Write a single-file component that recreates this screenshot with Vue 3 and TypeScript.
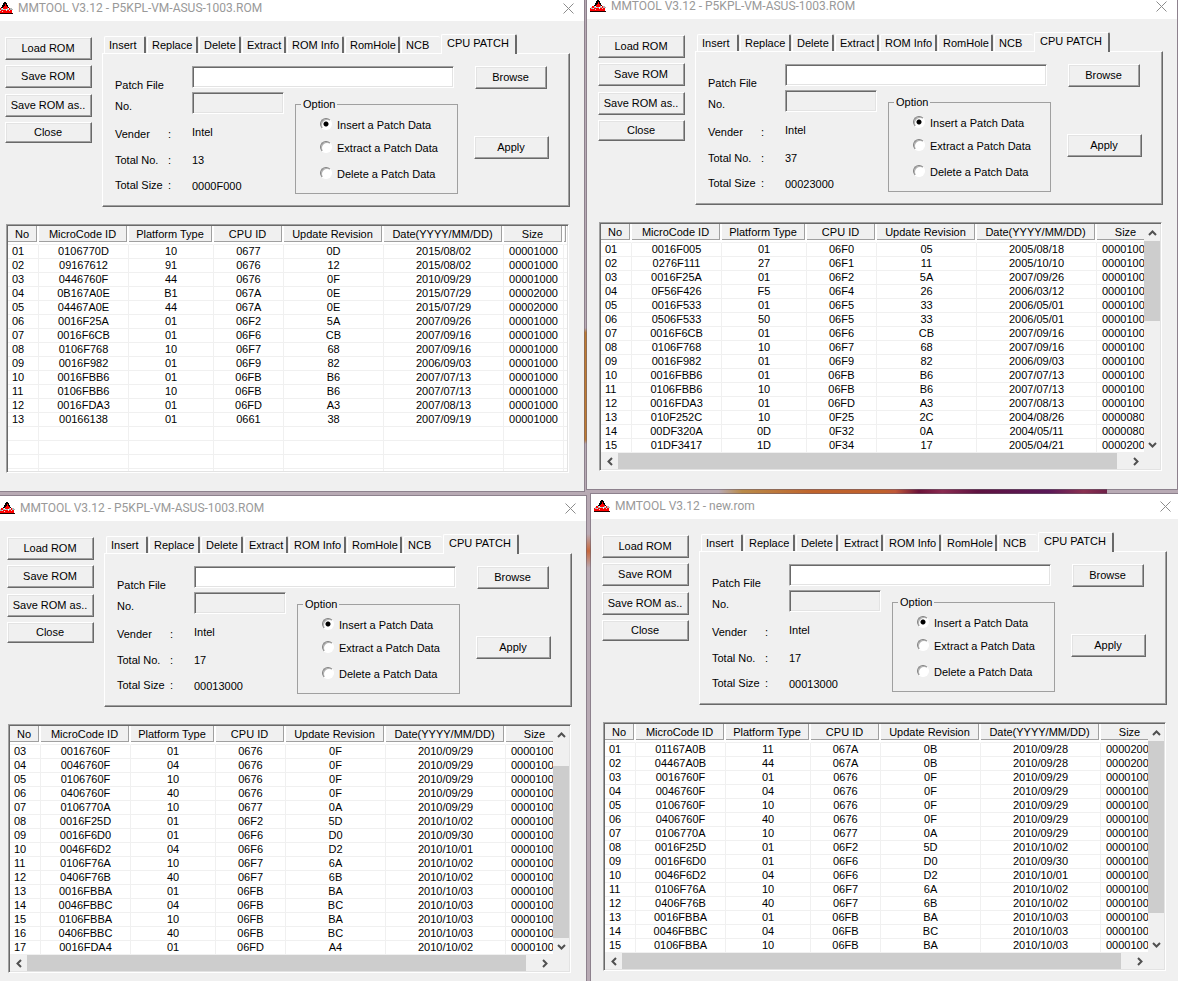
<script setup lang="ts">
import { reactive } from 'vue'

type Row = [string, string, string, string, string, string, string]

interface ToolWindow {
  id: string
  title: string
  total: string
  size: string
  rows: Row[]
  blanks: number
  scroll: { top: number; height: number } | null
  option: string
}

const parse = (text: string, first = 1): Row[] =>
  text.trim().split('\n').map((line, i) => {
    const [code, platform, cpu, rev, date, size] = line.trim().split(' ')
    return [String(first + i).padStart(2, '0'), code, platform, cpu, rev, date, size]
  })

const original = parse(`
0106770D 10 0677 0D 2015/08/02 00001000
09167612 91 0676 12 2015/08/02 00001000
0446760F 44 0676 0F 2010/09/29 00001000
0B167A0E B1 067A 0E 2015/07/29 00002000
04467A0E 44 067A 0E 2015/07/29 00002000
0016F25A 01 06F2 5A 2007/09/26 00001000
0016F6CB 01 06F6 CB 2007/09/16 00001000
0106F768 10 06F7 68 2007/09/16 00001000
0016F982 01 06F9 82 2006/09/03 00001000
0016FBB6 01 06FB B6 2007/07/13 00001000
0106FBB6 10 06FB B6 2007/07/13 00001000
0016FDA3 01 06FD A3 2007/08/13 00001000
00166138 01 0661 38 2007/09/19 00001000`)

const extended = parse(`
0016F005 01 06F0 05 2005/08/18 0000100
0276F111 27 06F1 11 2005/10/10 0000100
0016F25A 01 06F2 5A 2007/09/26 0000100
0F56F426 F5 06F4 26 2006/03/12 0000100
0016F533 01 06F5 33 2006/05/01 0000100
0506F533 50 06F5 33 2006/05/01 0000100
0016F6CB 01 06F6 CB 2007/09/16 0000100
0106F768 10 06F7 68 2007/09/16 0000100
0016F982 01 06F9 82 2006/09/03 0000100
0016FBB6 01 06FB B6 2007/07/13 0000100
0106FBB6 10 06FB B6 2007/07/13 0000100
0016FDA3 01 06FD A3 2007/08/13 0000100
010F252C 10 0F25 2C 2004/08/26 0000080
00DF320A 0D 0F32 0A 2004/05/11 0000080
01DF3417 1D 0F34 17 2005/04/21 0000200`)

const updated = parse(`
01167A0B 11 067A 0B 2010/09/28 0000200
04467A0B 44 067A 0B 2010/09/28 0000200
0016760F 01 0676 0F 2010/09/29 0000100
0046760F 04 0676 0F 2010/09/29 0000100
0106760F 10 0676 0F 2010/09/29 0000100
0406760F 40 0676 0F 2010/09/29 0000100
0106770A 10 0677 0A 2010/09/29 0000100
0016F25D 01 06F2 5D 2010/10/02 0000100
0016F6D0 01 06F6 D0 2010/09/30 0000100
0046F6D2 04 06F6 D2 2010/10/01 0000100
0106F76A 10 06F7 6A 2010/10/02 0000100
0406F76B 40 06F7 6B 2010/10/02 0000100
0016FBBA 01 06FB BA 2010/10/03 0000100
0046FBBC 04 06FB BC 2010/10/03 0000100
0106FBBA 10 06FB BA 2010/10/03 0000100
0406FBBC 40 06FB BC 2010/10/03 0000100
0016FDA4 01 06FD A4 2010/10/02 0000100`)

const rom = 'MMTOOL V3.12 - P5KPL-VM-ASUS-1003.ROM'
const windows = reactive<ToolWindow[]>([
  { id: 'a', title: rom, total: '13', size: '0000F000', rows: original, blanks: 4, scroll: null, option: 'Insert' },
  { id: 'b', title: rom, total: '37', size: '00023000', rows: extended, blanks: 0, scroll: { top: 0, height: 41 }, option: 'Insert' },
  { id: 'c', title: rom, total: '17', size: '00013000', rows: updated.slice(2), blanks: 0, scroll: { top: 12, height: 88 }, option: 'Insert' },
  { id: 'd', title: 'MMTOOL V3.12 - new.rom', total: '17', size: '00013000', rows: updated.slice(0, 15), blanks: 0, scroll: { top: 0, height: 88 }, option: 'Insert' },
])

const commands = ['Load ROM', 'Save ROM', 'Save ROM as..', 'Close']
const tabs = ['Insert', 'Replace', 'Delete', 'Extract', 'ROM Info', 'RomHole', 'NCB', 'CPU PATCH']
const options = ['Insert', 'Extract', 'Delete']
const columns = ['No', 'MicroCode ID', 'Platform Type', 'CPU ID', 'Update Revision', 'Date(YYYY/MM/DD)', 'Size']
</script>

<template>
  <main class="desktop">
    <section v-for="w in windows" :key="w.id" class="window" :class="'window-' + w.id">
      <header class="titlebar">
        <svg class="logo" viewBox="0 0 16 12" aria-hidden="true">
          <path d="M7 0h2v1h1v2h1v2h1v1H4V5h1V3h1V1h1z" fill="#000" />
          <path d="M8 2h1v2h1v1h1v2H6V5h1V4h1z" fill="#f00" />
          <path d="M2 6h2v1h1v1h6V7h1V6h2v2h1v3H0V8h1V7h1z" fill="#f00" />
          <path d="M1 7h1v1h1v1H1zM4 6h1v1h1v1H4zM7 7h2v1H7zM10 6h1v1h1v1h-2zM13 6h2v1h1v1h-3z" fill="#b0b4b4" />
          <path d="M3 8h1v1H3zM6 7h1v1H6zM9 8h1v1H9zM12 8h1v1h-1zM5 9h1v1H5z" fill="#dcdcdc" />
          <path d="M0 11h16v1H0z" fill="#200" />
        </svg>
        <h1>{{ w.title }}</h1>
        <button class="close" type="button" aria-label="Close window">
          <svg viewBox="0 0 11 11" aria-hidden="true"><path d="M.5 .5 L10.5 10.5 M10.5 .5 L.5 10.5" /></svg>
        </button>
      </header>

      <div class="upper">
        <nav class="commands">
          <button v-for="c in commands" :key="c" type="button" class="push">{{ c }}</button>
        </nav>

        <div class="tabbed">
          <div class="tabs" role="tablist">
            <button
              v-for="(t, i) in tabs"
              :key="t"
              type="button"
              role="tab"
              class="tab"
              :class="['tab-' + i, { active: i === 7 }]"
              :aria-selected="i === 7"
            >{{ t }}</button>
          </div>

          <div class="panel" role="tabpanel">
            <div class="labels">
              <label :for="'file-' + w.id">Patch File</label>
              <label :for="'no-' + w.id">No.</label>
              <span class="pair"><span>Vender</span><span>:</span></span>
              <span class="pair"><span>Total No.</span><span>:</span></span>
              <span class="pair"><span>Total Size</span><span>:</span></span>
            </div>
            <div class="middle">
              <input :id="'file-' + w.id" class="field file" type="text">
              <div class="details">
                <div class="values">
                  <input :id="'no-' + w.id" class="field number" type="text" disabled>
                  <span>Intel</span>
                  <span>{{ w.total }}</span>
                  <span>{{ w.size }}</span>
                </div>
                <fieldset class="group">
                  <legend>Option</legend>
                  <label v-for="o in options" :key="o" class="choice">
                    <input v-model="w.option" type="radio" :name="'option-' + w.id" :value="o">
                    <span>{{ o }} a Patch Data</span>
                  </label>
                </fieldset>
              </div>
            </div>
            <div class="actions">
              <button type="button" class="push browse">Browse</button>
              <button type="button" class="push">Apply</button>
            </div>
          </div>
        </div>
      </div>

      <div class="list" :class="{ scrolling: w.scroll }">
        <div class="viewport">
          <table>
            <colgroup>
              <col v-for="(c, i) in columns" :key="c" :class="'col-' + i">
              <col>
            </colgroup>
            <thead>
              <tr>
                <th v-for="c in columns" :key="c" scope="col"><div class="head">{{ c }}</div></th>
                <td><div class="head"></div></td>
              </tr>
            </thead>
            <tbody>
              <tr v-for="r in w.rows" :key="r[0]">
                <td v-for="(v, i) in r" :key="i">{{ v }}</td>
                <td></td>
              </tr>
              <tr v-for="n in w.blanks" :key="'blank' + n">
                <td v-for="i in 8" :key="i"></td>
              </tr>
            </tbody>
          </table>
        </div>
        <template v-if="w.scroll">
          <div class="bar vertical">
            <button type="button" aria-label="Scroll up"><svg viewBox="0 0 9 6"><path d="M1 5 L4.5 1.5 L8 5" /></svg></button>
            <div class="track">
              <div class="thumb" :style="{ top: w.scroll.top + '%', height: w.scroll.height + '%' }"></div>
            </div>
            <button type="button" aria-label="Scroll down"><svg viewBox="0 0 9 6"><path d="M1 1 L4.5 4.5 L8 1" /></svg></button>
          </div>
          <div class="bar horizontal">
            <button type="button" aria-label="Scroll left"><svg class="tall" viewBox="0 0 6 9"><path d="M5 1 L1.5 4.5 L5 8" /></svg></button>
            <div class="track"><div class="thumb"></div></div>
            <button type="button" aria-label="Scroll right"><svg class="tall" viewBox="0 0 6 9"><path d="M1 1 L4.5 4.5 L1 8" /></svg></button>
          </div>
        </template>
      </div>
    </section>
  </main>
</template>

<style>
body {
  margin: 0;
  overflow: hidden;
}
</style>

<style scoped>
* {
  box-sizing: border-box;
}

.desktop {
  position: relative;
  min-height: 100vh;
  overflow: hidden;
  background:
    linear-gradient(90deg, transparent 61%, #b98a48 63%, #c0642c 69%, #c0602c 75%, #c05838 76%, #6b1238 78%, #8a2a50 80%, #5e1240 83%, #5a1858 89%, #8a3050 92%, #6d2048 94%, transparent 94%) 0 489px / 100% 5px no-repeat,
    linear-gradient(180deg, transparent, #c07c30 4%, #c07c30 96%, transparent) calc(50% - 3px) 328px / 8px 116px no-repeat,
    linear-gradient(180deg, transparent, #c8683c, transparent) 50% 534px / 8px 34px no-repeat,
    #b8aab4;
  color: #000;
  font: 11px/14px "Liberation Sans", Arial, sans-serif;
}

button,
input {
  font: inherit;
  color: inherit;
}

.window {
  position: absolute;
  display: flex;
  flex-direction: column;
  padding-bottom: 18px;
  border: 1px solid rgba(105, 95, 110, 0.55);
  background: #f0f0f0;
  background-clip: padding-box;
}

.window-a {
  top: -5px;
  left: -7px;
  right: calc(50% + 4px);
}

.window-b {
  top: -7px;
  left: calc(50% - 3px);
  right: 0;
}

.window-c {
  top: 495px;
  left: -5px;
  right: calc(50% + 2px);
}

.window-d {
  top: 493px;
  left: calc(50% + 1px);
  right: -4px;
}

.titlebar {
  display: flex;
  align-items: center;
  height: 25px;
  padding: 0 10px 1px 3px;
  background: #fff;
}

.logo {
  width: 16px;
  height: 12px;
}

h1 {
  flex: 1;
  margin: 0 0 0 5px;
  color: #999;
  font: 12px/12px Roboto, "Open Sans", sans-serif;
  white-space: nowrap;
}

.close {
  display: flex;
  padding: 0;
  border: 0;
  background: none;
}

.close svg {
  width: 11px;
  height: 11px;
  stroke: #8c8c8c;
  fill: none;
}

.upper {
  display: flex;
  gap: 10px;
  padding: 13px 14px 0 11px;
}

.commands {
  display: flex;
  flex-direction: column;
  gap: 5px;
  width: 87px;
  padding-top: 3px;
}

.push {
  height: 23px;
  padding: 0 1px 2px 0;
  border: 1px solid;
  border-color: #fff #696969 #696969 #fff;
  box-shadow: inset -1px -1px #a0a0a0, inset 1px 1px #e3e3e3;
  background: #f0f0f0;
  white-space: nowrap;
}

.commands .push:nth-child(3) {
  margin-top: 1px;
}

.commands .push:last-child {
  height: 21px;
}

.tabbed {
  flex: 1;
}

.tabs {
  display: flex;
  align-items: flex-end;
  height: 19px;
  padding-left: 2px;
}

.tab {
  height: 17px;
  margin-right: 1px;
  padding: 0 0 0 4px;
  border: 1px solid #fff;
  border-right: 2px solid #696969;
  border-bottom: 0;
  border-radius: 2px 2px 0 0;
  background: #f0f0f0;
  text-align: left;
  white-space: nowrap;
}

.tab-0 { width: 42px; }
.tab-1 { width: 51px; }
.tab-2 { width: 42px; }
.tab-3 { width: 44px; }
.tab-4 { width: 57px; }
.tab-5 { width: 55px; }

.tab-6 {
  width: 39px;
  border-right: 0;
}

.tab-7 {
  width: 76px;
}

.tab.active {
  position: relative;
  height: 20px;
  margin-bottom: -1px;
  padding-bottom: 3px;
  padding-left: 5px;
}

.panel {
  display: grid;
  grid-template-columns: 77px 1fr 75px;
  padding: 12px 20px 12px 12px;
  border: 1px solid;
  border-color: #fff #696969 #696969 #fff;
  box-shadow: inset -1px -1px #a0a0a0;
}

.labels {
  display: grid;
  grid-template-rows: 21px 28px 26px 25px 14px;
  align-content: start;
  padding-top: 12px;
}

.pair {
  display: grid;
  grid-template-columns: 53px auto;
  justify-content: start;
}

.middle {
  margin-right: 16px;
}

.field {
  display: block;
  width: 100%;
  height: 22px;
  padding: 0 3px;
  border: 1px solid;
  border-color: #a0a0a0 #fff #fff #a0a0a0;
  box-shadow: inset 1px 1px #696969, inset -1px -1px #e3e3e3;
  background: #fff;
  outline: 0;
}

.file {
  width: calc(100% - 4px);
}

.number {
  background: #f0f0f0;
}

.details {
  display: grid;
  grid-template-columns: 92px 1fr;
  column-gap: 11px;
  padding-top: 4px;
}

.values {
  display: grid;
  grid-template-rows: 33px 28px 26px 14px;
  align-content: start;
}

.group {
  display: grid;
  grid-template-rows: 23px 26px 14px;
  margin: 5px 0 0;
  padding: 7px 0 12px 24px;
  border: 1px solid #a0a0a0;
  min-width: 0;
}

.group legend {
  margin-left: -19px;
  padding: 0 2px;
}

.choice {
  display: flex;
  gap: 5px;
  height: 14px;
  white-space: nowrap;
}

.choice input {
  appearance: none;
  width: 12px;
  height: 12px;
  margin: 0;
  border: 1px solid;
  border-color: #808080 #fff #fff #808080;
  border-radius: 50%;
  background: #fff;
  box-shadow: inset 1px 1px #b0b0b0;
}

.choice input:checked {
  background: radial-gradient(circle, #000 2px, #fff 3px);
}

.actions {
  display: flex;
  flex-direction: column;
  gap: 47px;
}

.browse {
  margin: 0 2px 0 1px;
}

.list {
  display: grid;
  height: 249px;
  margin: 17px 15px 0 12px;
  border: 1px solid;
  border-color: #a0a0a0 #fff #fff #a0a0a0;
  box-shadow: inset 1px 1px #696969, inset -1px -1px #e3e3e3;
  padding: 1px;
  background: #fff;
}

.scrolling {
  grid-template: 1fr 16px / 1fr 16px;
  background: #f0f0f0;
  background-clip: content-box;
}

.viewport {
  overflow: hidden;
  min-width: 0;
  background: #fff;
}

table {
  width: 559px;
  border-collapse: separate;
  border-spacing: 0;
  table-layout: fixed;
}

.col-0 { width: 31px; }
.col-1 { width: 90px; }
.col-2 { width: 85px; }
.col-3 { width: 70px; }
.col-4 { width: 100px; }
.col-5 { width: 120px; }
.col-6 { width: 60px; }

th,
td {
  height: 14px;
  padding: 0;
  border-right: 1px solid #f0f0f0;
  border-bottom: 1px solid #f0f0f0;
  font-weight: 400;
  line-height: 13px;
  text-align: center;
  white-space: nowrap;
}

thead th,
thead td {
  height: 19px;
  padding: 0 1px 2px 0;
  border-right-color: #fff;
}

.head {
  height: 16px;
  border-right: 1px solid #a0a0a0;
  border-bottom: 1px solid #a0a0a0;
  background: #f0f0f0;
  line-height: 17px;
}

tbody td:first-child {
  padding-left: 4px;
  text-align: left;
}

.scrolling tbody td:nth-child(7) {
  padding-left: 5px;
  text-align: left;
}

td:last-child {
  border-right: 0;
}

.bar {
  display: flex;
  background: #f0f0f0;
}

.vertical {
  flex-direction: column;
}

.bar button {
  display: flex;
  flex: 0 0 17px;
  align-items: center;
  justify-content: center;
  padding: 0;
  border: 0;
  background: none;
}

.bar svg {
  width: 9px;
  height: 6px;
  fill: none;
  stroke: #505050;
  stroke-width: 2;
}

.bar svg.tall {
  width: 6px;
  height: 9px;
}

.track {
  position: relative;
  flex: 1;
}

.thumb {
  position: relative;
  background: #cdcdcd;
}

.horizontal .thumb {
  width: 98%;
  height: 100%;
}
</style>
